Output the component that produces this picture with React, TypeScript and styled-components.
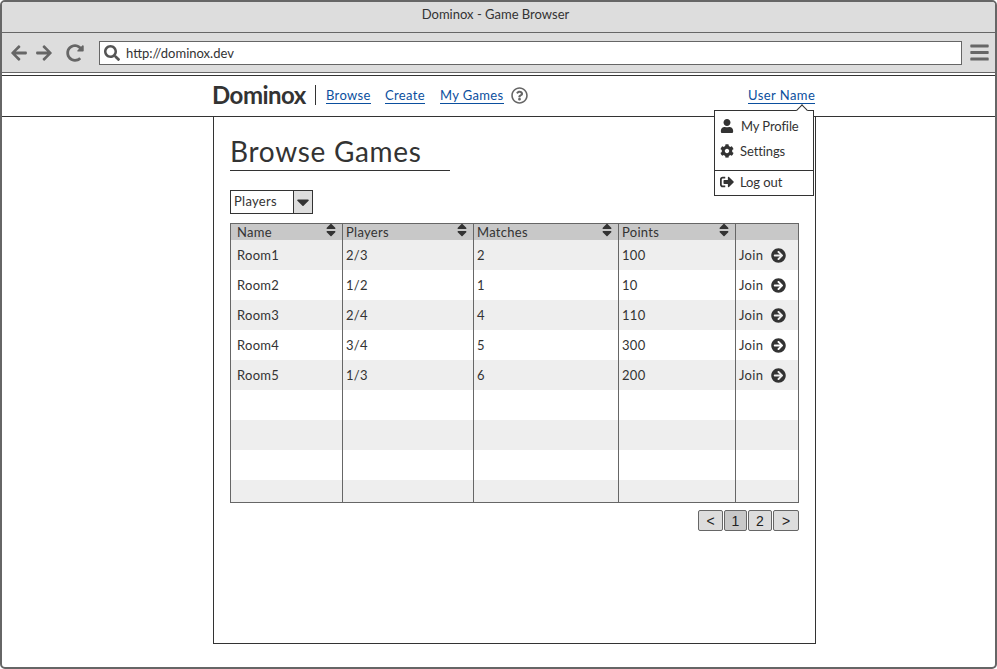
import React from 'react'
import styled, { createGlobalStyle } from 'styled-components'
import {
  FaArrowLeft,
  FaArrowRight,
  FaArrowCircleRight,
  FaBars,
  FaCaretDown,
  FaCog,
  FaRedoAlt,
  FaRegQuestionCircle,
  FaSearch,
  FaSignOutAlt,
  FaSort,
  FaUser,
} from 'react-icons/fa'

const Global = createGlobalStyle`
  html, body {
    margin: 0;
    padding: 0;
    background: #fff;
  }
  * {
    box-sizing: border-box;
  }
  body {
    font-family: Lato, "Liberation Sans", sans-serif;
    color: #333;
  }
`

const Frame = styled.div`
  width: 997px;
  height: 669px;
  border: 2px solid #666;
  border-radius: 5px;
  display: flex;
  flex-direction: column;
  overflow: hidden;
`

const TitleBar = styled.div`
  height: 31px;
  flex: none;
  background: #ddd;
  border-bottom: 1px solid #666;
  display: flex;
  align-items: center;
  justify-content: center;
  font-size: 13px;
  padding: 0 6px 7px 0;
`

const ToolBar = styled.div`
  height: 40px;
  flex: none;
  background: #ddd;
  border-bottom: 1px solid #666;
  display: flex;
  align-items: center;
  padding: 0 0 0 8px;
  color: #666;
`

const NavIcon = styled.span<{ $gap: number }>`
  display: flex;
  flex: none;
  margin-right: ${(p) => p.$gap}px;
  font-size: 18px;
`

const Address = styled.div`
  width: 863px;
  height: 24px;
  flex: none;
  background: #fff;
  border: 1px solid #666;
  display: flex;
  align-items: center;
  padding-left: 4px;
  font-size: 13px;
  color: #333;
  gap: 6px;
  svg {
    color: #555;
    font-size: 16px;
  }
`

const Menu = styled.span`
  display: flex;
  flex: none;
  margin-left: 7px;
  font-size: 21px;
`

const Spacer = styled.div`
  height: 2px;
  flex: none;
`

const NavBar = styled.div`
  height: 42px;
  flex: none;
  background: #fff;
  border-top: 1px solid #333;
  border-bottom: 1px solid #333;
  margin: 0 -1px;
  padding: 0 0 2px 211px;
  display: flex;
  align-items: center;
  position: relative;
`

const Brand = styled.div`
  font-size: 24px;
  font-weight: 700;
  letter-spacing: -0.5px;
  width: 104px;
  height: 20px;
  line-height: 20px;
  border-right: 1px solid #333;
  margin-right: 10px;
  white-space: nowrap;
`

const NavLink = styled.a<{ $width: number }>`
  width: ${(p) => p.$width}px;
  font-size: 13px;
  letter-spacing: 0.35px;
  color: #0b4f9e;
  white-space: nowrap;
  span {
    border-bottom: 1px solid #0b4f9e;
  }
`

const HelpIcon = styled.span`
  display: flex;
  font-size: 17px;
  color: #666;
  margin-right: 220px;
`

const UserLink = styled.a`
  font-size: 13px;
  letter-spacing: 0.45px;
  color: #0b4f9e;
  border-bottom: 1px solid #0b4f9e;
  white-space: nowrap;
`

const Caret = styled.div`
  position: absolute;
  left: 797px;
  top: 30px;
  width: 8px;
  height: 8px;
  background: #fff;
  border-top: 1px solid #333;
  border-left: 1px solid #333;
  transform: rotate(45deg);
  z-index: 3;
`

const Dropdown = styled.div`
  position: absolute;
  left: 713px;
  top: 34px;
  width: 100px;
  height: 86px;
  background: #fff;
  border: 1px solid #333;
  z-index: 2;
`

const DropSection = styled.div<{ $height: number; $top: number; $bottom: number }>`
  height: ${(p) => p.$height}px;
  padding-top: ${(p) => p.$top}px;
  padding-bottom: ${(p) => p.$bottom}px;
  display: flex;
  flex-direction: column;
  gap: 1px;
  & + & {
    border-top: 1px solid #333;
  }
`

const DropItem = styled.div<{ $iconGap: number }>`
  flex: 0 1 24px;
  display: flex;
  align-items: center;
  padding-left: 5px;
  font-size: 13px;
  letter-spacing: -0.1px;
  gap: ${(p) => p.$iconGap}px;
  svg {
    font-size: 14px;
    flex: none;
  }
`

const Content = styled.main`
  width: 603px;
  height: 527px;
  flex: none;
  margin-left: 211px;
  border: 1px solid #333;
  border-top: none;
  padding: 16px 16px 0;
`

const Title = styled.h1`
  margin: 0;
  width: 220px;
  height: 38px;
  border-bottom: 1px solid #333;
  font-size: 28px;
  font-weight: 400;
  letter-spacing: 0.7px;
  line-height: 37px;
  white-space: nowrap;
`

const Select = styled.div`
  width: 83px;
  height: 24px;
  margin-top: 19px;
  border: 1px solid #333;
  display: flex;
  font-size: 13px;
  letter-spacing: 0.3px;
`

const SelectLabel = styled.div`
  flex: 1;
  padding-left: 3px;
  line-height: 21px;
`

const SelectArrow = styled.div`
  width: 19px;
  background: #ddd;
  border-left: 1px solid #333;
  display: flex;
  align-items: center;
  justify-content: center;
  font-size: 20px;
`

const Table = styled.table`
  width: 568px;
  height: 280px;
  margin-top: 9px;
  border: 1px solid #666;
  border-collapse: collapse;
  border-spacing: 0;
  table-layout: fixed;
  font-size: 13px;
  letter-spacing: 0.3px;
`

const Head = styled.th`
  height: 16px;
  padding: 0 6px;
  background: #c8c8c8;
  border-left: 1px solid #666;
  font-weight: 400;
  text-align: left;
  line-height: 14px;
  &:first-child {
    border-left: none;
  }
  & > div {
    display: flex;
    justify-content: space-between;
    align-items: center;
    margin-right: -3px;
  }
  svg {
    font-size: 16px;
    margin-top: -3px;
  }
  &:nth-child(n + 2) {
    padding-left: 3px;
  }
`

const Row = styled.tr<{ $shaded: boolean }>`
  height: 30px;
  background: ${(p) => (p.$shaded ? '#eee' : '#fff')};
  &:last-child {
    height: 22px;
  }
`

const Cell = styled.td`
  padding: 0 0 0 3px;
  border-left: 1px solid #666;
  vertical-align: middle;
  &:first-child {
    border-left: none;
    padding-left: 6px;
  }
`

const Join = styled.span`
  display: flex;
  align-items: center;
  gap: 8px;
  svg {
    font-size: 15px;
    margin-top: 2px;
  }
`

const Pager = styled.div`
  display: flex;
  justify-content: flex-end;
  gap: 1px;
  margin-top: 7px;
`

const PageButton = styled.div<{ $active?: boolean; $width: number }>`
  width: ${(p) => p.$width}px;
  height: 21px;
  border: 1px solid #666;
  border-radius: 2px;
  background: ${(p) => (p.$active ? '#c8c8c8' : '#ddd')};
  display: flex;
  align-items: center;
  justify-content: center;
  font-family: "Liberation Sans", sans-serif;
  font-size: 14px;
  color: #222;
`

const columns = ['Name', 'Players', 'Matches', 'Points']
const rooms = [
  ['Room1', '2/3', '2', '100'],
  ['Room2', '1/2', '1', '10'],
  ['Room3', '2/4', '4', '110'],
  ['Room4', '3/4', '5', '300'],
  ['Room5', '1/3', '6', '200'],
]
const blankRows = 4

const App = () => {
  return (
    <Frame>
      <Global />
      <TitleBar>Dominox - Game Browser</TitleBar>
      <ToolBar>
        <NavIcon $gap={7}>
          <FaArrowLeft />
        </NavIcon>
        <NavIcon $gap={13}>
          <FaArrowRight />
        </NavIcon>
        <NavIcon $gap={15}>
          <FaRedoAlt />
        </NavIcon>
        <Address>
          <FaSearch />
          http://dominox.dev
        </Address>
        <Menu>
          <FaBars />
        </Menu>
      </ToolBar>
      <Spacer />
      <NavBar>
        <Brand>Dominox</Brand>
        <NavLink $width={59}>
          <span>Browse</span>
        </NavLink>
        <NavLink $width={55}>
          <span>Create</span>
        </NavLink>
        <NavLink $width={71}>
          <span>My Games</span>
        </NavLink>
        <HelpIcon>
          <FaRegQuestionCircle />
        </HelpIcon>
        <UserLink>User Name</UserLink>
        <Caret />
        <Dropdown>
          <DropSection $height={59} $top={3} $bottom={0}>
            <DropItem $iconGap={7}>
              <FaUser />
              My Profile
            </DropItem>
            <DropItem $iconGap={6}>
              <FaCog />
              Settings
            </DropItem>
          </DropSection>
          <DropSection $height={25} $top={0} $bottom={2}>
            <DropItem $iconGap={6}>
              <FaSignOutAlt />
              Log out
            </DropItem>
          </DropSection>
        </Dropdown>
      </NavBar>
      <Content>
        <Title>Browse Games</Title>
        <Select>
          <SelectLabel>Players</SelectLabel>
          <SelectArrow>
            <FaCaretDown />
          </SelectArrow>
        </Select>
        <Table>
          <colgroup>
            <col width="112" />
            <col width="131" />
            <col width="145" />
            <col width="117" />
            <col width="63" />
          </colgroup>
          <thead>
            <tr>
              {columns.map((c) => (
                <Head key={c}>
                  <div>
                    {c}
                    <FaSort />
                  </div>
                </Head>
              ))}
              <Head />
            </tr>
          </thead>
          <tbody>
            {rooms.map((r, i) => (
              <Row key={r[0]} $shaded={i % 2 === 0}>
                {r.map((v, j) => (
                  <Cell key={j}>{v}</Cell>
                ))}
                <Cell>
                  <Join>
                    Join
                    <FaArrowCircleRight />
                  </Join>
                </Cell>
              </Row>
            ))}
            {Array.from({ length: blankRows }).map((_, i) => (
              <Row key={i} $shaded={(i + rooms.length) % 2 === 0}>
                <Cell />
                <Cell />
                <Cell />
                <Cell />
                <Cell />
              </Row>
            ))}
          </tbody>
        </Table>
        <Pager>
          <PageButton $width={25}>&lt;</PageButton>
          <PageButton $width={23} $active>
            1
          </PageButton>
          <PageButton $width={24}>2</PageButton>
          <PageButton $width={26}>&gt;</PageButton>
        </Pager>
      </Content>
    </Frame>
  )
}

export default App
